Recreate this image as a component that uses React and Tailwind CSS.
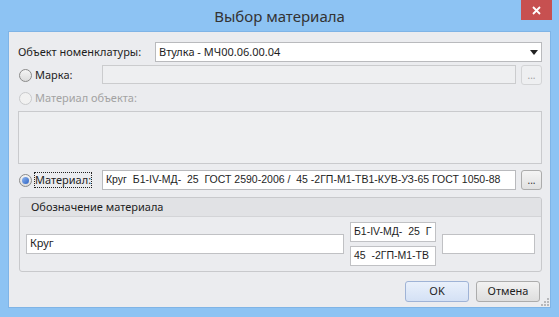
import React from "react";

const ui = { fontFamily: '"Noto Sans", "Liberation Sans", sans-serif' };
const tb = { fontFamily: '"Liberation Sans", Arial, sans-serif' };

function Radio({ checked, disabled }) {
  return (
    <span
      className={
        "inline-flex items-center justify-center w-[13px] h-[13px] rounded-full border " +
        (disabled ? "border-[#c9cacc] bg-[#f1f1f1]" : "border-[#8a8a8a] bg-gradient-to-b from-[#f4f4f4] to-[#dcdcdc]")
      }
    >
      {checked && (
        <span className="w-[7px] h-[7px] rounded-full bg-gradient-to-br from-[#8fb6f0] to-[#2f63c2]" />
      )}
    </span>
  );
}

function DotsButton({ disabled }) {
  return (
    <div
      className={
        "w-[21px] h-[20px] rounded-[3px] border flex items-end justify-center pb-[4px] text-[10px] leading-none " +
        (disabled
          ? "border-[#d3d4d6] bg-[#eeeff1] text-[#a0a0a0]"
          : "border-[#acacac] bg-gradient-to-b from-[#f4f4f4] to-[#e1e1e1] text-[#333]")
      }
    >
      ...
    </div>
  );
}

export default function App() {
  return (
    <div className="w-[559px] h-[317px] bg-[#8dc3f3] flex flex-col text-[11px] text-[#1e1e1e]" style={ui}>
      {/* title bar */}
      <div className="relative h-[31px] flex items-center justify-center">
        <span className="text-[15px] text-[#333] pt-[2px]">Выбор материала</span>
        <div className="absolute right-[7px] top-0 w-[31px] h-[20px] bg-[#c75050] flex items-center justify-center">
          <svg width="9" height="9" viewBox="0 0 9 9">
            <path d="M1 1 L8 8 M8 1 L1 8" stroke="#fff" strokeWidth="1.8" />
          </svg>
        </div>
      </div>

      {/* client */}
      <div className="relative mx-[8px] h-[277px] bg-[#ebecef] border border-[#7fb4e6] pl-[9px] pr-[8px] flex flex-col">
        {/* row 1 */}
        <div className="mt-[10px] flex items-center h-[20px]">
          <span className="w-[137px]">Объект номенклатуры:</span>
          <div className="flex-1 h-[20px] bg-white border border-[#b9babd] flex items-center px-[3px] justify-between">
            <span>Втулка - МЧ00.06.00.04</span>
            <svg width="8" height="5" viewBox="0 0 8 5">
              <path d="M0 0 H8 L4 5 Z" fill="#222" />
            </svg>
          </div>
        </div>

        {/* row 2 */}
        <div className="mt-[3px] flex items-center h-[20px]">
          <div className="w-[84px] flex items-center gap-[3px] pl-[1px]">
            <Radio />
            <span>Марка:</span>
          </div>
          <div className="w-[414px] h-[19px] self-start bg-[#eeeff1] border border-[#cbccce]" />
          <div className="ml-auto">
            <DotsButton disabled />
          </div>
        </div>

        {/* row 3 */}
        <div className="mt-[3px] flex items-center h-[20px] gap-[3px] pl-[1px] text-[#a3a3a3]">
          <Radio disabled />
          <span>Материал объекта:</span>
        </div>

        <div className="mt-[3px] h-[53px] bg-[#eeeff1] border border-[#c9cacd]" />

        {/* material row */}
        <div className="mt-[6px] flex items-center h-[20px]">
          <div className="w-[84px] flex items-center gap-[3px] pl-[1px]">
            <Radio checked />
            <span className="outline outline-1 outline-dotted outline-[#222] leading-[14px]">Материал:</span>
          </div>
          <div
            className="w-[414px] h-[20px] bg-white border border-[#b9babd] flex items-center px-[3px] text-[10.5px] whitespace-pre overflow-hidden"
            style={tb}
          >
            Круг  Б1-IV-МД-  25  ГОСТ 2590-2006 /  45 -2ГП-М1-ТВ1-КУВ-УЗ-65 ГОСТ 1050-88
          </div>
          <div className="ml-auto">
            <DotsButton />
          </div>
        </div>

        {/* group */}
        <div className="mt-[7px] h-[75px] ml-[1px] border border-[#c8c9cc] rounded-[3px] flex flex-col overflow-hidden">
          <div className="h-[19px] bg-[#e1e2e5] border-b border-[#d3d4d7] flex items-center pl-[11px]">
            Обозначение материала
          </div>
          <div className="flex-1 flex items-center pl-[6px] pr-[6px] gap-[6px] pb-[1px]">
            <div className="w-[321px] h-[20px] bg-white border border-[#c0c1c4] flex items-center px-[3px]">Круг</div>
            <div className="flex flex-col gap-[4px] text-[10.5px]" style={tb}>
              <div className="w-[86px] h-[20px] bg-white border border-[#c0c1c4] flex items-center px-[3px] whitespace-pre">
                Б1-IV-МД-  25  Г
              </div>
              <div className="w-[86px] h-[20px] bg-white border border-[#c0c1c4] flex items-center px-[3px] whitespace-pre">
                {" "}45  -2ГП-М1-ТВ
              </div>
            </div>
            <div className="w-[94px] h-[20px] bg-white border border-[#c0c1c4]" />
          </div>
        </div>

        {/* buttons */}
        <div className="mt-[9px] flex justify-end gap-[7px] pr-[2px]">
          <div className="w-[64px] h-[21px] rounded-[3px] border border-[#9fb3d6] bg-gradient-to-b from-[#e9f0fb] to-[#d4e1f5] flex items-center justify-center">
            OK
          </div>
          <div className="w-[64px] h-[21px] rounded-[3px] border border-[#acacac] bg-gradient-to-b from-[#f2f2f2] to-[#dedede] flex items-center justify-center">
            Отмена
          </div>
        </div>

        {/* resize grip */}
        <svg className="absolute right-[1px] bottom-[1px]" width="8" height="8" viewBox="0 0 8 8">
          <g fill="#b7b8bb">
            <rect x="6" y="0" width="2" height="2" />
            <rect x="3" y="3" width="2" height="2" />
            <rect x="6" y="3" width="2" height="2" />
            <rect x="0" y="6" width="2" height="2" />
            <rect x="3" y="6" width="2" height="2" />
            <rect x="6" y="6" width="2" height="2" />
          </g>
        </svg>
      </div>
    </div>
  );
}
